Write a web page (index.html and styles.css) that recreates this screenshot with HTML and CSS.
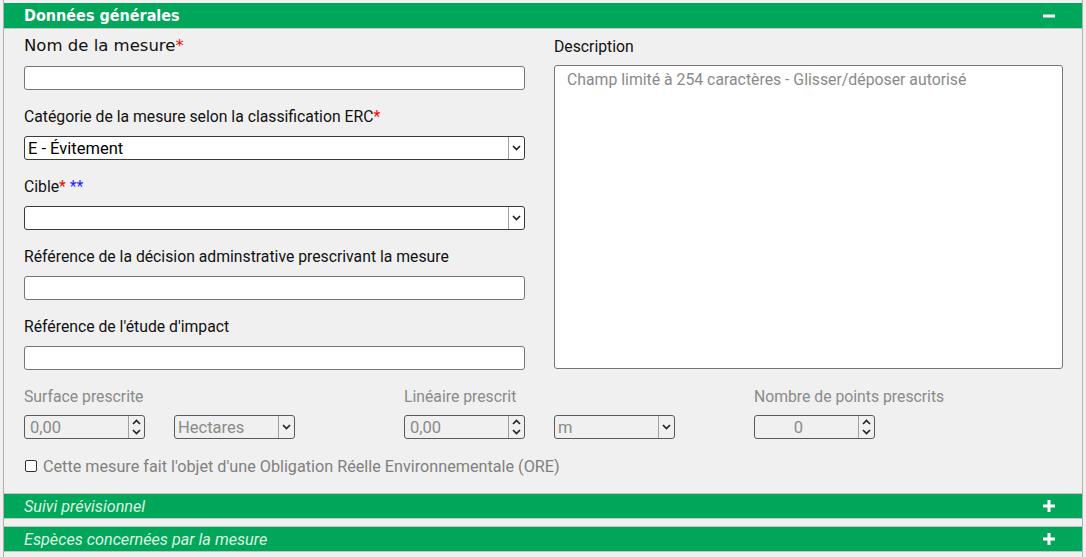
FILE: index.html
```html
<!DOCTYPE html>
<html lang="fr">
<head>
<meta charset="utf-8">
<title>Données générales</title>
<link rel="stylesheet" href="styles.css">
</head>
<body>
<div class="page">
  <section class="section">
    <div class="section-head">
      <span class="section-title">Données générales</span>
      <svg class="toggle-icon" width="12" height="12" viewBox="0 0 12 12"><rect x="0" y="4.5" width="12" height="3" fill="#fff"/></svg>
    </div>
    <div class="section-body">
      <div class="top-row">
        <div class="col-left">
          <div class="field">
            <div class="label label-big">Nom de la mesure<span class="req">*</span></div>
            <div class="text-input"></div>
          </div>
          <div class="field">
            <div class="label">Catégorie de la mesure selon la classification ERC<span class="req">*</span></div>
            <div class="select">
              <span class="select-value">E - Évitement</span>
              <span class="select-arrow"><svg width="9" height="6" viewBox="0 0 9 6"><polyline points="1,1 4.5,4.5 8,1" fill="none" stroke="#222" stroke-width="1.7"/></svg></span>
            </div>
          </div>
          <div class="field">
            <div class="label">Cible<span class="req">*</span> <span class="req-blue">**</span></div>
            <div class="select">
              <span class="select-value"></span>
              <span class="select-arrow"><svg width="9" height="6" viewBox="0 0 9 6"><polyline points="1,1 4.5,4.5 8,1" fill="none" stroke="#222" stroke-width="1.7"/></svg></span>
            </div>
          </div>
          <div class="field">
            <div class="label">Référence de la décision adminstrative prescrivant la mesure</div>
            <div class="text-input"></div>
          </div>
          <div class="field">
            <div class="label">Référence de l'étude d'impact</div>
            <div class="text-input"></div>
          </div>
        </div>
        <div class="col-right">
          <div class="label">Description</div>
          <div class="textarea"><span class="placeholder">Champ limité à 254 caractères - Glisser/déposer autorisé</span></div>
        </div>
      </div>

      <div class="bottom-row">
        <div class="measure">
          <div class="label label-muted">Surface prescrite</div>
          <div class="measure-controls">
            <div class="spin">
              <span class="spin-value">0,00</span>
              <span class="spin-btn"><svg width="9" height="18" viewBox="0 0 9 18"><polyline points="1,6 4.5,2.5 8,6" fill="none" stroke="#222" stroke-width="1.6"/><polyline points="1,12 4.5,15.5 8,12" fill="none" stroke="#222" stroke-width="1.6"/></svg></span>
            </div>
            <div class="select select-small">
              <span class="select-value muted">Hectares</span>
              <span class="select-arrow"><svg width="9" height="6" viewBox="0 0 9 6"><polyline points="1,1 4.5,4.5 8,1" fill="none" stroke="#222" stroke-width="1.7"/></svg></span>
            </div>
          </div>
        </div>
        <div class="measure">
          <div class="label label-muted">Linéaire prescrit</div>
          <div class="measure-controls">
            <div class="spin">
              <span class="spin-value">0,00</span>
              <span class="spin-btn"><svg width="9" height="18" viewBox="0 0 9 18"><polyline points="1,6 4.5,2.5 8,6" fill="none" stroke="#222" stroke-width="1.6"/><polyline points="1,12 4.5,15.5 8,12" fill="none" stroke="#222" stroke-width="1.6"/></svg></span>
            </div>
            <div class="select select-small">
              <span class="select-value muted">m</span>
              <span class="select-arrow"><svg width="9" height="6" viewBox="0 0 9 6"><polyline points="1,1 4.5,4.5 8,1" fill="none" stroke="#222" stroke-width="1.7"/></svg></span>
            </div>
          </div>
        </div>
        <div class="measure">
          <div class="label label-muted">Nombre de points prescrits</div>
          <div class="measure-controls">
            <div class="spin">
              <span class="spin-value centered">0</span>
              <span class="spin-btn"><svg width="9" height="18" viewBox="0 0 9 18"><polyline points="1,6 4.5,2.5 8,6" fill="none" stroke="#222" stroke-width="1.6"/><polyline points="1,12 4.5,15.5 8,12" fill="none" stroke="#222" stroke-width="1.6"/></svg></span>
            </div>
          </div>
        </div>
      </div>

      <div class="check-row">
        <span class="checkbox"></span>
        <span class="check-label">Cette mesure fait l'objet d'une Obligation Réelle Environnementale (ORE)</span>
      </div>
    </div>
  </section>

  <div class="bar">
    <span class="bar-title">Suivi prévisionnel</span>
    <svg class="toggle-icon" width="12" height="12" viewBox="0 0 12 12"><rect x="0" y="4.5" width="12" height="3" fill="#fff"/><rect x="4.5" y="0" width="3" height="12" fill="#fff"/></svg>
  </div>
  <div class="bar">
    <span class="bar-title">Espèces concernées par la mesure</span>
    <svg class="toggle-icon" width="12" height="12" viewBox="0 0 12 12"><rect x="0" y="4.5" width="12" height="3" fill="#fff"/><rect x="4.5" y="0" width="3" height="12" fill="#fff"/></svg>
  </div>
</div>
</body>
</html>
```

FILE: styles.css
```css
* { box-sizing: border-box; }

html, body {
  margin: 0;
  padding: 0;
  background: #f0f0f0;
}

body {
  font-family: Roboto, "Liberation Sans", sans-serif;
  font-size: 15.75px;
  color: #111;
  overflow: hidden;
}

.page {
  margin: 0 3px;
  height: 557px;
  padding-top: 3px;
  border-left: 1px solid #b0b0b0;
  border-right: 1px solid #b0b0b0;
  background: #f0f0f0;
}

.section-head {
  height: 26px;
  background: #00a65a;
  border-bottom: 1px solid #c4c4c4;
  display: flex;
  align-items: center;
  justify-content: space-between;
  padding: 0 27px 0 20px;
}

.section-title {
  color: #fff;
  font-family: "DejaVu Sans Condensed", "DejaVu Sans", sans-serif;
  font-weight: bold;
  font-size: 16px;
}

.section-body {
  padding: 7px 18px 0 20px;
}

.top-row {
  display: flex;
  gap: 29px;
}

.col-left {
  width: 501px;
}

.col-right {
  width: 509px;
  display: flex;
  flex-direction: column;
}

.field {
  margin-bottom: 16px;
}

.label {
  height: 20px;
  line-height: 22px;
  margin-bottom: 10px;
  white-space: nowrap;
}

.label-big {
  font-family: "DejaVu Sans", sans-serif;
  font-size: 16.5px;
  line-height: 20px;
}

.label-muted {
  color: #8a8a8a;
}

.req { color: #f00; }
.req-blue { color: #22f; }

.text-input {
  height: 24px;
  background: #fff;
  border: 1px solid #767676;
  border-radius: 3px;
}

.select {
  height: 24px;
  background: #fff;
  border: 1px solid #3a3a3a;
  border-radius: 3px;
  display: flex;
  align-items: stretch;
}

.select-value {
  flex: 1;
  padding-left: 3px;
  line-height: 23px;
  font-size: 16.5px;
  color: #000;
  white-space: nowrap;
  overflow: hidden;
}

.select-value.muted {
  color: #8a8a8a;
  font-size: 16.5px;
}

.select-arrow {
  width: 16px;
  border-left: 1px solid #a0a0a0;
  display: flex;
  align-items: center;
  justify-content: center;
}

.textarea {
  margin-top: -1px;
  height: 304px;
  background: #fff;
  border: 1px solid #767676;
  border-radius: 3px;
  padding: 4px 12px;
}

.placeholder {
  color: #8a8a8a;
  font-size: 15.8px;
  white-space: nowrap;
}

.bottom-row {
  display: grid;
  grid-template-columns: 380px 350px 1fr;
}

.measure .label {
  margin-bottom: 9px;
}

.measure-controls {
  display: flex;
  gap: 29px;
}

.spin {
  width: 121px;
  height: 24px;
  border: 1px solid #5a5a5a;
  border-radius: 3px;
  display: flex;
  background: #f0f0f0;
}

.spin-value {
  flex: 1;
  padding-left: 5px;
  line-height: 23px;
  color: #8a8a8a;
  font-size: 16.5px;
}

.spin-value.centered {
  text-align: center;
  padding-left: 0;
  padding-right: 16px;
}

.spin-btn {
  width: 16px;
  border-left: 1px solid #a0a0a0;
  display: flex;
  align-items: center;
  justify-content: center;
}

.select-small {
  width: 121px;
  background: #f0f0f0;
  border-color: #5a5a5a;
}

.check-row {
  margin-top: 17px;
  height: 20px;
  display: flex;
  align-items: center;
  padding-left: 1px;
}

.checkbox {
  width: 12px;
  height: 12px;
  border: 1px solid #333;
  border-radius: 2px;
  background: #fff;
  margin-right: 6px;
}

.check-label {
  color: #808080;
  font-size: 16.2px;
  white-space: nowrap;
}

.bar {
  margin-top: 17px;
  height: 26px;
  background: #00a65a;
  border-top: 1px solid #c4c4c4;
  border-bottom: 1px solid #c4c4c4;
  display: flex;
  align-items: center;
  justify-content: space-between;
  padding: 0 27px 0 20px;
}

.bar + .bar {
  margin-top: 7px;
}

.bar-title {
  color: #dff3e4;
  font-style: italic;
  font-size: 16.2px;
}
```
